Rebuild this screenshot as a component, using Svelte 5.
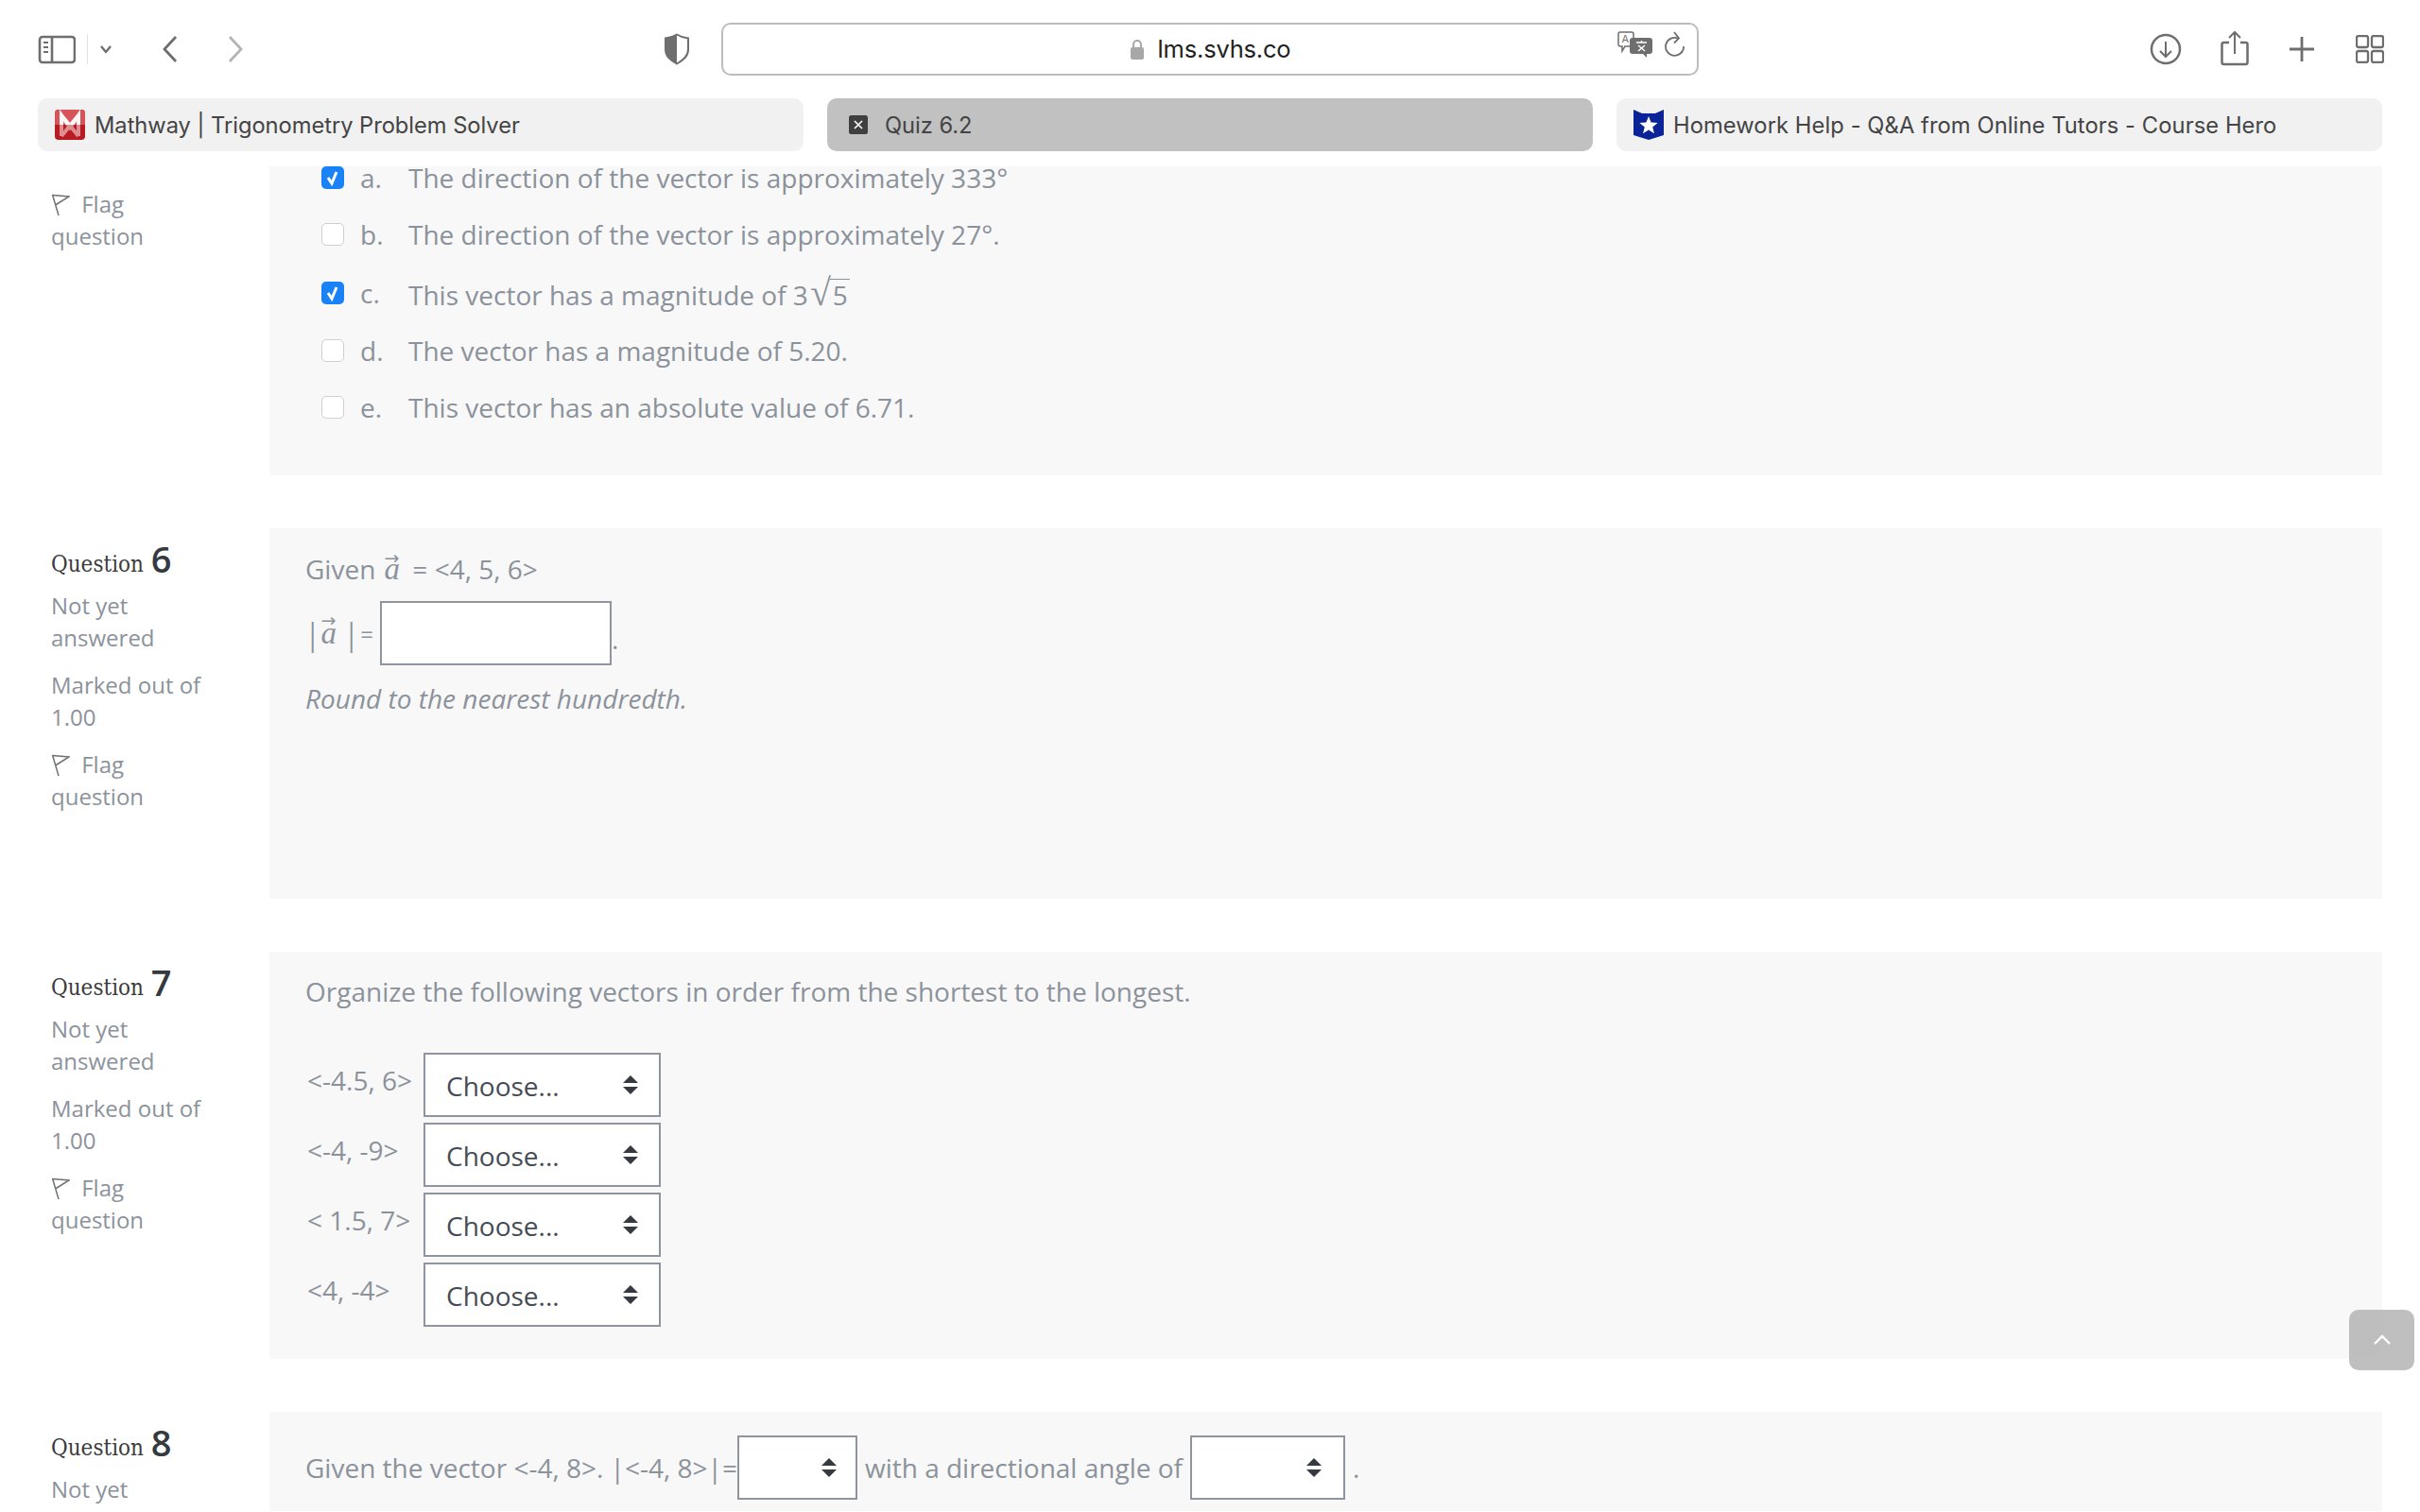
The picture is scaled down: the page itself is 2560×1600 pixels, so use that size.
<script>
  const options = [
    { l: 'a.', t: 'The direction of the vector is approximately 333°', c: true },
    { l: 'b.', t: 'The direction of the vector is approximately 27°.', c: false },
    { l: 'c.', t: 'This vector has a magnitude of 3', c: true, root: true },
    { l: 'd.', t: 'The vector has a magnitude of 5.20.', c: false },
    { l: 'e.', t: 'This vector has an absolute value of 6.71.', c: false }
  ];
  const vectors = ['<-4.5, 6>', '<-4, -9>', '< 1.5, 7>', '<4, -4>'];
</script>

{#snippet arrows()}
  <svg class="arrows" width="16" height="20" viewBox="0 0 16 20"><path d="M8 0l8 8H0zM8 20l8-8H0z" fill="#343a40"/></svg>
{/snippet}

{#snippet flag()}
  <div class="flag"><svg width="20" height="23" viewBox="0 0 20 23" fill="none" stroke="#6f7377" stroke-width="1.500"><path d="M1.500 1l6.500 22M1.500 1.500L19 3 4.500 12"/></svg> Flag<br />question</div>
{/snippet}

{#snippet heading(n)}
  <div class="qno">Question <b>{n}</b></div>
{/snippet}

{#snippet meta(n)}
  {@render heading(n)}
  <div class="st">Not yet<br />answered</div>
  <div class="st">Marked out of<br />1.00</div>
  {@render flag()}
{/snippet}

<div class="page">
  <header>
    <div class="toolbar">
      <div class="left">
        <svg width="40" height="32" viewBox="0 0 40 32" fill="none" stroke="#6e6e6e" stroke-width="2.600"><rect x="2" y="3" width="37" height="27" rx="3"/><path d="M15 3v27"/><path d="M6 9h5M6 14h5M6 19h5" stroke-width="2"/></svg>
        <span class="sep"></span>
        <svg class="chev" width="14" height="10" viewBox="0 0 14 10" fill="none" stroke="#6e6e6e" stroke-width="2.400"><path d="M2 2l5 6 5-6"/></svg>
        <svg class="back" width="18" height="30" viewBox="0 0 18 30" fill="none" stroke="#6e6e6e" stroke-width="2.800"><path d="M15 2L3 15l12 13"/></svg>
        <svg class="fwd" width="18" height="30" viewBox="0 0 18 30" fill="none" stroke="#b5b5b5" stroke-width="2.800"><path d="M3 2l12 13L3 28"/></svg>
      </div>
      <svg class="shield" width="28" height="34" viewBox="0 0 28 34"><path d="M14 1.500c4 2.500 8 3.500 12 4v12c0 7-5 11-12 15-7-4-12-8-12-15v-12c4-.5 8-1.500 12-4z" fill="#fff" stroke="#6e6e6e" stroke-width="2"/><path d="M14 1.500v31c-7-4-12-8-12-15v-12c4-.5 8-1.500 12-4z" fill="#6e6e6e"/></svg>
      <div class="url">
        <svg class="lock" width="16" height="22" viewBox="0 0 16 22"><rect x="1" y="9" width="14" height="13" rx="2" fill="#a8a8a8"/><path d="M4 10V6a4 4 0 018 0v4" fill="none" stroke="#a8a8a8" stroke-width="2"/></svg>
        <span class="host">lms.svhs.co</span>
        <div class="urlr">
          <svg width="38" height="28" viewBox="0 0 38 28"><path d="M3 1h12a2 2 0 012 2v11a2 2 0 01-2 2H8l-3 5v-5H3a2 2 0 01-2-2V3a2 2 0 012-2z" fill="#fff" stroke="#6e6e6e" stroke-width="1.500"/><text x="4.500" y="12" font-size="11" font-family="Inter" fill="#6e6e6e">A</text><path d="M16 7h18a3 3 0 013 3v11a3 3 0 01-3 3h-3v4l-4-4H16a3 3 0 01-3-3V10a3 3 0 013-3z" fill="#6e6e6e"/><path d="M20 12h11M25.500 10v2M22 15l7 6M29 15l-7 6" stroke="#fff" stroke-width="1.500"/></svg>
          <svg width="22" height="30" viewBox="0 0 22 30" fill="none" stroke="#6e6e6e" stroke-width="1.800"><path d="M14 7.500A9.500 9.500 0 1020 16"/><path d="M10 1l5 6.500-5 5"/></svg>
        </div>
      </div>
      <div class="right">
        <svg width="34" height="34" viewBox="0 0 34 34" fill="none" stroke="#6e6e6e" stroke-width="2.500"><circle cx="17" cy="17" r="15"/><path d="M17 9v16M11 19l6 6 6-6" stroke-width="2"/></svg>
        <svg class="share" width="30" height="38" viewBox="0 0 30 38" fill="none" stroke="#6e6e6e" stroke-width="2.500"><path d="M9 13H3.500a2 2 0 00-2 2v19a2 2 0 002 2h23a2 2 0 002-2V15a2 2 0 00-2-2H21"/><path d="M15 25V2M9 8l6-6 6 6" stroke-width="2"/></svg>
        <svg class="plus" width="28" height="28" viewBox="0 0 28 28" fill="none" stroke="#6e6e6e" stroke-width="2.800"><path d="M14 1v26M1 14h26"/></svg>
        <svg width="30" height="30" viewBox="0 0 30 30" fill="none" stroke="#6e6e6e" stroke-width="2.300"><rect x="1" y="1" width="12" height="12" rx="2"/><rect x="17" y="1" width="12" height="12" rx="2"/><rect x="1" y="17" width="12" height="12" rx="2"/><rect x="17" y="17" width="12" height="12" rx="2"/></svg>
      </div>
    </div>
    <div class="tabs">
      <div class="tab">
        <svg class="fav" width="32" height="32" viewBox="0 0 32 32">
          <defs><linearGradient id="mw" x1="0" y1="0" x2="0" y2="32" gradientUnits="userSpaceOnUse"><stop offset=".5" stop-color="#fff" stop-opacity=".95"/><stop offset=".5" stop-color="#fff" stop-opacity=".5"/></linearGradient></defs>
          <rect width="32" height="32" rx="4" fill="#b81c22"/><path d="M0 4a4 4 0 014-4h24a4 4 0 014 4v12H0z" fill="#d6545a"/>
          <path d="M7 28V6l9 13 9-13v22M7 6l18 22M25 6L7 28" fill="none" stroke="url(#mw)" stroke-width="4"/>
        </svg>
        Mathway | Trigonometry Problem Solver
      </div>
      <div class="tab active">
        <svg class="favx" width="20" height="20" viewBox="0 0 20 20"><rect width="20" height="20" rx="2.500" fill="#3f3f3f"/><path d="M6 6l8 8M14 6l-8 8" stroke="#fff" stroke-width="1.600"/></svg>
        Quiz 6.2
      </div>
      <div class="tab wide-text">
        <svg class="fav" width="32" height="32" viewBox="0 0 32 32"><path d="M0 0l9 4h14l9-4v27l-16 5-16-5z" fill="#0a2398"/><path d="M16 7l2.600 6.500 7 .4-5.400 4.500 1.800 6.800-6-3.800-6 3.800 1.800-6.800-5.400-4.500 7-.4z" fill="#fff"/></svg>
        Homework Help - Q&amp;A from Online Tutors - Course Hero
      </div>
    </div>
  </header>

  <main>
    <section class="q first">
      <aside>{@render flag()}</aside>
      <div class="panel p5">
        <ul>
          {#each options as o}
            <li class:root={o.root}>
              <span class="cb" class:on={o.c}>
                {#if o.c}<svg width="24" height="24" viewBox="0 0 24 24" fill="none" stroke="#fff" stroke-width="3"><path d="M7 12l4 6 5-12"/></svg>{/if}
              </span>
              <span class="ltr">{o.l}</span>
              <span class:rtext={o.root}>{o.t}{#if o.root}<span class="rad">√</span><span class="ov">5</span>{/if}</span>
            </li>
          {/each}
        </ul>
      </div>
    </section>

    <section class="q">
      <aside>{@render meta(6)}</aside>
      <div class="panel p6">
        <p class="given">Given <span class="vec">a</span> = &lt;4, 5, 6&gt;</p>
        <p class="abs"><span class="bar">|</span><span class="vec v2">a</span><span class="bar">|</span><span class="eq">=</span><input type="text" aria-label="answer" /><span class="dot">.</span></p>
        <p class="round">Round to the nearest hundredth.</p>
      </div>
    </section>

    <section class="q">
      <aside>{@render meta(7)}</aside>
      <div class="panel p7">
        <p class="org">Organize the following vectors in order from the shortest to the longest.</p>
        <div class="match">
          {#each vectors as v}
            <div class="mrow">
              <span class="vlabel">{v}</span>
              <div class="sel wide"><select><option>Choose...</option></select>{@render arrows()}</div>
            </div>
          {/each}
        </div>
      </div>
    </section>

    <section class="q last">
      <aside>
        {@render heading(8)}
        <div class="st">Not yet</div>
      </aside>
      <div class="panel p8">
        <span>Given the vector &lt;-4, 8&gt;. |&lt;-4, 8&gt;|=</span>
        <div class="sel s1"><select aria-label="magnitude"></select>{@render arrows()}</div>
        <span>with a directional angle of</span>
        <div class="sel s2"><select aria-label="angle"></select>{@render arrows()}</div>
        <span>.</span>
      </div>
    </section>
  </main>

  <button class="top" aria-label="Back to top"><svg width="20" height="12" viewBox="0 0 20 12" fill="none" stroke="#fff" stroke-width="2.400"><path d="M2 10l8-8 8 8"/></svg></button>
</div>

<style>
  :global(body) { margin: 0; background: #fff; }
  .page {
    position: relative; width: 2560px; height: 1600px; overflow: hidden; background: #fff;
    font-family: "Open Sans", sans-serif; color: #8b929b;
  }
  header { height: 176px; font-family: Inter, sans-serif; }
  .toolbar { height: 104px; display: flex; align-items: center; padding: 0 40px; box-sizing: border-box; }
  .left { display: flex; align-items: center; width: 660px; }
  .sep { width: 1px; height: 32px; background: #e2e2e2; margin: 0 12px 0 12px; }
  .chev { margin-right: 52px; }
  .back { margin-right: 51px; }
  .shield { margin-left: 2px; }
  .url {
    margin-left: 33px; width: 1034px; height: 56px; box-sizing: border-box; border: 2px solid #bcbcbc; border-radius: 10px;
    display: flex; align-items: center; justify-content: center; gap: 12px; position: relative;
    font-size: 25.500px; color: #222; letter-spacing: -.2px;
  }
  .host { margin-bottom: 2px; margin-left: 2px; }
  .urlr { position: absolute; right: 12px; top: 7px; display: flex; gap: 12px; }
  .right { margin-left: auto; display: flex; align-items: center; width: 248px; justify-content: space-between; margin-right: -2px; }
  .share { margin: -3px 0 0 -2px; }
  .plus { margin-left: -1px; }
  .tabs { display: flex; gap: 25px; padding: 0 40px; }
  .tab {
    flex: none; width: 810px; height: 56px; background: #f1f1f1; border-radius: 10px; display: flex; align-items: center; gap: 10px;
    padding-left: 18px; font-size: 23.700px; color: #444; box-sizing: border-box; letter-spacing: -.03px;
  }
  .tab.wide-text { letter-spacing: .09px; }
  .tab.active { background: #c1c1c1; gap: 18px; padding-left: 23px; }
  main { height: 1424px; overflow: hidden; }
  .q { display: flex; margin-bottom: 56px; }
  aside { width: 285px; flex: none; box-sizing: border-box; padding: 6px 0 0 54px; font-size: 24px; line-height: 34px; }
  .first aside { padding-top: 23px; }
  .panel { flex: none; width: 2235px; background: #f8f8f8; box-sizing: border-box; padding-left: 38px; font-size: 28px; }
  .qno { font-family: "DejaVu Serif Condensed", "DejaVu Serif", "Liberation Serif", serif; font-size: 24px; color: #3c3c3c; line-height: 50px; height: 50px; margin-bottom: 9px; }
  .qno b { font-family: "Open Sans", sans-serif; font-weight: 600; font-size: 38px; color: #343a40; margin-left: 1px; position: relative; top: 1px; }
  .st { margin-bottom: 16px; }
  .flag svg { vertical-align: -3px; margin-right: 6px; }
  .st + .flag { margin-top: 3px; }

  ul { list-style: none; margin: -18px 0 0; padding: 0 0 45px 17px; }
  .p5 { height: 327px; overflow: hidden; }
  li { display: flex; align-items: center; height: 60px; line-height: 38px; }
  li.root { height: 63px; }
  .cb { width: 24px; height: 24px; box-sizing: border-box; border: 1.500px solid #cfd0d2; border-radius: 5px; background: #fff; margin-right: 17px; display: block; }
  .cb svg { display: block; }
  .cb.on { background: #1a82f7; border: none; }
  .ltr { width: 51px; }
  .rtext { position: relative; top: 2px; }
  .rad { font-family: "Liberation Serif", serif; font-size: 40px; line-height: 0; margin-left: 2px; }
  .ov { display: inline-block; border-top: 1.500px solid #8b929b; line-height: 33px; padding: 0 2px 0 3px; margin-left: -1px; }

  p { margin: 0; }
  .p6 { height: 392px; padding-top: 24px; }
  .given { line-height: 38px; height: 38px; }
  .vec { font-family: "Liberation Serif", serif; font-style: italic; position: relative; font-size: 33px; margin: 0 6px 0 2px; line-height: 0; }
  .vec::before { content: "→"; position: absolute; left: 0; top: -3px; line-height: 1; font-size: 19px; font-style: normal; font-family: "DejaVu Sans", sans-serif; }
  .abs { display: flex; align-items: center; margin-top: 15px; height: 68px; padding-left: 0; }
  .v2 { margin: 0 8px 0 1px; line-height: 38px; }
  .v2::before { top: -4px; }
  .bar { display: inline-block; transform: scaleY(1.200); }
  .eq { margin: 0 7px 0 2px; font-size: 24px; }
  input { width: 245px; height: 68px; box-sizing: border-box; border: 2.500px solid #8f959f; background: #fff; border-radius: 0; padding: 0; outline: none; }
  .dot { align-self: flex-end; margin-bottom: 14px; line-height: 1; }
  .round { font-style: italic; margin-top: 16px; line-height: 38px; }

  .p7 { height: 431px; padding-top: 23px; }
  .org { line-height: 38px; }
  .match { margin-top: 46px; padding-left: 2px; }
  .mrow { display: flex; height: 74px; }
  .vlabel { width: 123px; flex: none; line-height: 58px; height: 58px; }
  .sel { position: relative; height: 68px; }
  .sel.wide { width: 251px; }
  .s1 { width: 127px; }
  .s2 { width: 164px; }
  select {
    appearance: none; display: block; width: 100%; height: 100%; box-sizing: border-box; border: 2.500px solid #8f959f; border-radius: 0;
    background: #fff; font: 28px "Open Sans", sans-serif; color: #454c55; padding: 1px 0 0 22px; outline: none;
  }
  .arrows { position: absolute; right: 24px; top: 24px; pointer-events: none; }
  .s1 .arrows { right: 22px; }
  .s2 .arrows { right: 25px; }

  .last { margin-bottom: 0; }
  .p8 { height: 105px; display: flex; align-items: flex-start; padding-top: 25px; line-height: 68px; gap: 8px; }
  .p8 > span:first-child { margin-right: -8px; }
  .top {
    position: absolute; left: 2485px; top: 1386px; width: 69px; height: 64px; border: none; border-radius: 10px; background: rgba(175,175,175,.8);
    display: flex; align-items: center; justify-content: center; padding: 0;
  }
</style>
